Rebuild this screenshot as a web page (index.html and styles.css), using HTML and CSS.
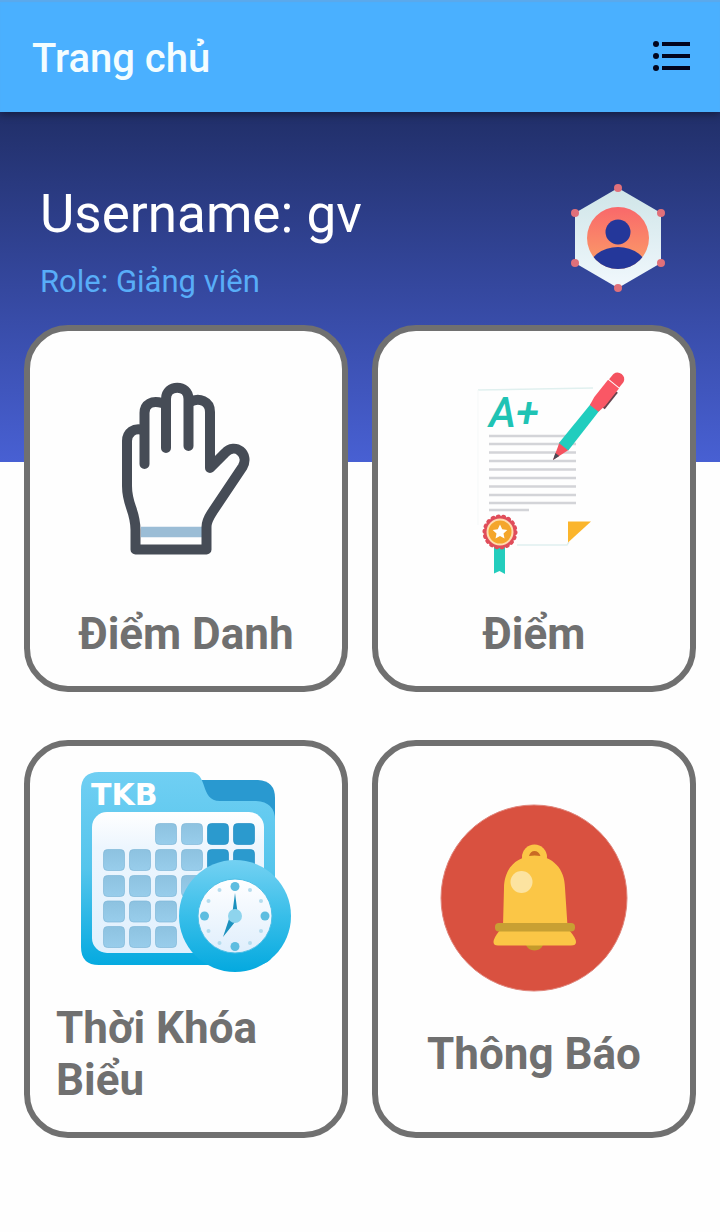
FILE: index.html
```html
<!DOCTYPE html>
<html lang="vi">
<head>
<meta charset="utf-8">
<meta name="viewport" content="width=device-width, initial-scale=1">
<title>Trang chủ</title>
<link rel="stylesheet" href="styles.css">
</head>
<body>
<header class="app-bar">
  <h1 class="app-title">Trang chủ</h1>
  <button class="menu-button" type="button" aria-label="Menu">
    <svg class="menu-icon" viewBox="0 0 48 48" aria-hidden="true">
      <g fill="#03051c"><circle cx="8" cy="12" r="3"/><circle cx="8" cy="24" r="3"/><circle cx="8" cy="36" r="3"/></g>
      <path d="M14 12H42M14 24H42M14 36H42" stroke="#03051c" stroke-width="4"/>
    </svg>
  </button>
</header>
<main class="home">
  <section class="profile">
    <div class="profile-text">
      <p class="username">Username: gv</p>
      <p class="role">Role: Giảng viên</p>
    </div>
    <svg class="avatar" viewBox="564 184 116 116" aria-hidden="true">
      <defs>
        <linearGradient id="hex" x1="0" y1="0" x2="0" y2="1"><stop offset="0" stop-color="#cfe5e8"/><stop offset="1" stop-color="#f1f8fd"/></linearGradient>
        <linearGradient id="sun" x1="0" y1="0" x2="0" y2="1"><stop offset="0" stop-color="#f9686a"/><stop offset="1" stop-color="#fba068"/></linearGradient>
        <clipPath id="disc"><circle cx="618" cy="238" r="31"/></clipPath>
      </defs>
      <path d="M618 188L661 213V263L618 288L575 263V213Z" fill="url(#hex)"/>
      <circle cx="618" cy="238" r="31" fill="url(#sun)"/>
      <g fill="#24379a">
        <circle cx="618" cy="232" r="12.500"/>
        <ellipse cx="618" cy="269" rx="29" ry="22" clip-path="url(#disc)"/>
      </g>
      <g fill="#e0707a"><circle cx="618" cy="188" r="4"/><circle cx="661" cy="213" r="4"/><circle cx="661" cy="263" r="4"/><circle cx="618" cy="288" r="4"/><circle cx="575" cy="263" r="4"/><circle cx="575" cy="213" r="4"/></g>
    </svg>
  </section>
  <nav class="cards">
    <a class="card" href="#diem-danh">
      <svg class="card-icon card-icon-tall" viewBox="56 357 260 251" aria-hidden="true">
        <path d="M141 532H202" stroke="#9bbdd6" stroke-width="10.500"/>
        <g fill="none" stroke="#464c56" stroke-width="10" stroke-linecap="round" stroke-linejoin="round">
          <path d="M143 430C134 427 127 433 127 441V486C127 506 135.500 510 135.500 530V549.500H206.500V527C206.500 520 210 516 213 511L242.500 467C250 454 235 442 225 453L210 468V412C210 401 199 397 190 402"/>
          <path d="M144.500 464V413C144.500 404 152 400 162 403"/>
          <path d="M166 448V399C166 384 188.500 384 188.500 399V446"/>
        </g>
      </svg>
      <span class="card-label">Điểm Danh</span>
    </a>
    <a class="card" href="#diem">
      <svg class="card-icon card-icon-tall" viewBox="404 357 260 251" aria-hidden="true">
        <path d="M478 390L593 388M517 545H567L569 542" fill="none" stroke="#e0f0ef" stroke-width="1.500"/>
        <path d="M478 390V525" stroke="#f5f8f8"/>
        <text class="grade" x="489" y="427">A+</text>
        <path d="M489 436H576M489 444H576M489 452.500H576M489 461H576M489 469.500H576M489 478H576M489 486.500H576M489 495H576M489 503H576M489 510H529" stroke="#d3d4d8" stroke-width="2.300"/>
        <path d="M568 521.500H591L568 542.500Z" fill="#fbb52c"/>
        <path d="M494 545H505V574L499.500 571L494 573.500Z" fill="#23cdbd"/>
        <circle cx="500" cy="532" r="16" fill="#e04d5a"/>
        <circle cx="500" cy="532" r="15.500" fill="none" stroke="#e04d5a" stroke-width="4" stroke-linecap="round" stroke-dasharray="1 4.410"/>
        <circle cx="500" cy="532" r="12.500" fill="#f4a62c" stroke="#ffdcae" stroke-width="2"/>
        <path d="M500 524.500L502.200 529.300L507.300 529.900L503.500 533.400L504.500 538.500L500 536L495.500 538.500L496.500 533.400L492.700 529.900L497.800 529.300Z" fill="#fff"/>
        <g transform="translate(553 460) rotate(-51.400)">
          <path d="M0 0L18 -6V6Z" fill="#f4525f"/>
          <path d="M0 0L7 -2.500V2.500Z" fill="#4a4a55"/>
          <path d="M17 -6L68 -5.500V5.500L17 6Z" fill="#20cdbe"/>
          <path d="M72 7.500H93" stroke="#68434e" stroke-width="2.500"/>
          <path d="M66 -5.500L75 -7H97V7H75L66 5.500Z" fill="#fa5765"/>
          <path d="M98 -6.500H105Q110 -5 110 0Q110 5 105 6.500H98Z" fill="#f4525f"/>
        </g>
      </svg>
      <span class="card-label">Điểm</span>
    </a>
    <a class="card" href="#thoi-khoa-bieu">
      <svg class="card-icon" viewBox="56 772 260 230" aria-hidden="true">
        <defs>
          <linearGradient id="folder" x1="0" y1="0" x2="0" y2="1"><stop offset="0" stop-color="#70cff3"/><stop offset=".5" stop-color="#55c5ec"/><stop offset="1" stop-color="#05aae0"/></linearGradient>
          <linearGradient id="sheet" x1="0" y1="0" x2="0" y2="1"><stop offset="0" stop-color="#fff"/><stop offset=".25" stop-color="#edf6fe"/><stop offset="1" stop-color="#e0f0fd"/></linearGradient>
          <linearGradient id="rim" x1="0" y1="0" x2="0" y2="1"><stop offset="0" stop-color="#74d1f2"/><stop offset=".5" stop-color="#38bee9"/><stop offset="1" stop-color="#04a9df"/></linearGradient>
          <linearGradient id="dial" x1="0" y1="0" x2="0" y2="1"><stop offset="0" stop-color="#fff"/><stop offset="1" stop-color="#dfeefc"/></linearGradient>
          <linearGradient id="cell" x1="0" y1="0" x2="0" y2="1"><stop offset="0" stop-color="#8dc2e0"/><stop offset="1" stop-color="#98cdeb"/></linearGradient>
          <rect id="day" width="21" height="21" rx="4"/>
        </defs>
        <path d="M195 780H258Q275 781 275 798V830H195Z" fill="#2999d0"/>
        <path d="M99 772H190C209 772 199 801 220 801H256Q275 802 275 820V945Q275 965 255 965H99Q81 965 81 947V790Q81 772 99 772Z" fill="url(#folder)"/>
        <rect x="92" y="812" width="172" height="141" rx="15" fill="url(#sheet)"/>
        <text class="folder-text" x="91" y="805">TKB</text>
        <g fill="url(#cell)" stroke="#7fb8d9" stroke-width=".7">
          <use href="#day" x="155.500" y="823.500"/><use href="#day" x="181.500" y="823.500"/>
          <use href="#day" x="103.500" y="849.500"/><use href="#day" x="129.500" y="849.500"/><use href="#day" x="155.500" y="849.500"/><use href="#day" x="181.500" y="849.500"/>
          <use href="#day" x="103.500" y="875.500"/><use href="#day" x="129.500" y="875.500"/><use href="#day" x="155.500" y="875.500"/><use href="#day" x="181.500" y="875.500"/>
          <use href="#day" x="103.500" y="901"/><use href="#day" x="129.500" y="901"/><use href="#day" x="155.500" y="901"/>
          <use href="#day" x="103.500" y="926.500"/><use href="#day" x="129.500" y="926.500"/><use href="#day" x="155.500" y="926.500"/>
        </g>
        <g fill="#2b9ace" stroke="#218ec4" stroke-width=".7">
          <use href="#day" x="207.500" y="823.500"/><use href="#day" x="233.500" y="823.500"/><use href="#day" x="207.500" y="849.500"/><use href="#day" x="233.500" y="849.500"/>
        </g>
        <circle cx="235" cy="916" r="56" fill="url(#rim)"/>
        <circle cx="235" cy="916" r="37" fill="url(#dial)" stroke="#4fbfe6"/>
        <g fill="#5dbde0"><circle cx="235" cy="886.500" r="4.500"/><circle cx="265" cy="916" r="4.500"/><circle cx="235" cy="946.500" r="4.500"/><circle cx="204.500" cy="916" r="4.500"/></g>
        <g fill="#b5dcee"><circle cx="250" cy="890" r="2"/><circle cx="261" cy="901" r="2"/><circle cx="261" cy="931" r="2"/><circle cx="250" cy="943" r="2"/><circle cx="219.500" cy="943" r="2"/><circle cx="208.500" cy="931" r="2"/><circle cx="208.500" cy="901" r="2"/><circle cx="219.500" cy="890" r="2"/></g>
        <path d="M232.500 912L235 893L237.500 912ZM229 919L223 937L235 922Z" fill="#1b91be"/>
        <circle cx="235" cy="916" r="7" fill="#8ed4ed"/>
      </svg>
      <span class="card-label">Thời Khóa Biểu</span>
    </a>
    <a class="card" href="#thong-bao">
      <svg class="card-icon" viewBox="404 798 260 230" aria-hidden="true">
        <circle cx="534" cy="898" r="93" fill="#d95140" stroke="#e0857b"/>
        <path d="M525.500 944H543.500Q541 950.500 534.500 950.500Q528 950.500 525.500 944Z" fill="#c49a2b"/>
        <circle cx="534.500" cy="857" r="12.500" fill="#fbc646"/>
        <path d="M503 926L504 888C504 869 516 856 534.500 856C553 856 565 869 565 888L567.500 926Z" fill="#fbc646"/>
        <path d="M529 856Q530.500 851 534.500 851Q538.500 851 540.500 856Q534.500 855 529 856Z" fill="#c96a24"/>
        <path d="M500 930H569Q576 938 576 942Q576 945.500 571 945.500H498Q493.500 945.500 493.500 942Q493.500 938 500 930Z" fill="#fbc646"/>
        <rect x="495" y="923" width="80" height="8.500" rx="4" fill="#c8a033"/>
        <circle cx="521.500" cy="882" r="11" fill="#fce3a0"/>
      </svg>
      <span class="card-label">Thông Báo</span>
    </a>
  </nav>
</main>
</body>
</html>
```
FILE: styles.css
```css
* { box-sizing: border-box; }

body {
  margin: 0;
  min-height: 100vh;
  background: #fefefe;
  font-family: Roboto, "Noto Sans", sans-serif;
}

.app-bar {
  position: relative;
  display: flex;
  align-items: center;
  justify-content: space-between;
  height: 112px;
  padding: 0 24px 0 32px;
  background: #4ab0ff;
  box-shadow: inset 0 2px 1px #5ba9ec, 0 2px 8px rgba(0, 0, 0, 0.4);
}

.app-title {
  margin: 0;
  padding-top: 6px;
  color: #f4fdff;
  font-size: 40px;
  font-weight: 500;
  line-height: 48px;
}

.menu-button {
  padding: 0;
  border: 0;
  background: none;
  cursor: pointer;
}

.menu-icon {
  display: block;
  width: 48px;
  height: 48px;
}

.home {
  padding: 72px 24px 48px;
  background: linear-gradient(#212f69, #4860d3) 0 0 / 100% 350px no-repeat;
}

.profile {
  display: flex;
  align-items: flex-start;
  justify-content: space-between;
  padding: 0 16px;
  margin-bottom: 25px;
}

.profile-text {
  display: flex;
  flex-direction: column;
  gap: 20px;
}

.username,
.role {
  margin: 0;
}

.username {
  color: #fff;
  font-size: 53px;
  line-height: 60px;
}

.role {
  color: #58adf8;
  font-size: 31px;
  line-height: 36px;
}

.avatar {
  width: 116px;
  height: 116px;
}

.cards {
  display: grid;
  grid-template-columns: 1fr 1fr;
  gap: 48px 24px;
}

.card {
  display: flex;
  flex-direction: column;
  align-items: center;
  justify-content: center;
  padding: 26px;
  border: 6px solid #707070;
  border-radius: 44px;
  background: #fefefe;
  color: #707070;
  text-decoration: none;
}

.card-icon {
  width: 100%;
  height: 230px;
}

.card-icon-tall {
  height: 251px;
}

.card-label {
  font-size: 44px;
  font-weight: 700;
  line-height: 52px;
}

.grade {
  fill: #1fc3b4;
  font-size: 42px;
  font-style: italic;
  font-weight: 500;
}

.folder-text {
  fill: #fff;
  font-family: "DejaVu Sans", sans-serif;
  font-size: 30px;
  font-weight: 700;
}
```
